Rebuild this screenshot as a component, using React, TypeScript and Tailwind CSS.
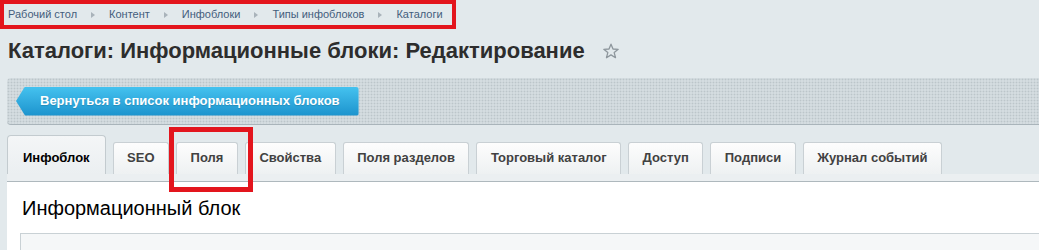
import { Fragment } from "react";

export default function App() {
  const crumbs = ["Рабочий стол", "Контент", "Инфоблоки", "Типы инфоблоков", "Каталоги"];
  const tabs = [
    "Инфоблок",
    "SEO",
    "Поля",
    "Свойства",
    "Поля разделов",
    "Торговый каталог",
    "Доступ",
    "Подписи",
    "Журнал событий",
  ];
  return (
    <div className="w-[1039px] h-[250px] overflow-hidden bg-[#e2e9ec] font-['Liberation_Sans',Arial,sans-serif] flex flex-col">
      <div className="flex">
        <div className="flex items-center h-[29px] border-4 border-[#e3151d] pl-1 pr-[9px] text-[11px] text-[#445d7c]">
          {crumbs.map((c, i) => (
            <Fragment key={i}>
              {i > 0 && (
                <span className="mx-[14px] w-0 h-0 border-y-[3.5px] border-y-transparent border-l-[4px] border-l-[#a9b3ba]" />
              )}
              <span>{c}</span>
            </Fragment>
          ))}
        </div>
      </div>

      <div className="h-[49px] shrink-0 pt-[9px] pl-2 flex items-start">
        <h1 className="text-[22px] leading-[26px] font-bold text-[#2d2d2d]">
          Каталоги: Информационные блоки: Редактирование
        </h1>
        <svg className="ml-[18px] mt-[5px]" width="16" height="16" viewBox="0 0 16 16">
          <polygon
            points="8,1.2 10,6 15.2,6.3 11.2,9.6 12.5,14.7 8,11.9 3.5,14.7 4.8,9.6 0.8,6.3 6,6"
            fill="none"
            stroke="#8d969c"
            strokeWidth="1.3"
            strokeLinejoin="round"
          />
        </svg>
      </div>

      <div className="ml-[7px] h-[47px] shrink-0 rounded-l-[4px] border-b border-[#a9b4ba] bg-[#d4dce0] bg-[radial-gradient(circle,#bcc5ca_0.8px,transparent_1.1px)] bg-size-[3px_3px] flex items-center pl-[9px]">
        <div className="h-[29px] flex items-center pl-[24px] pr-[19px] rounded-[3px] bg-linear-to-b from-[#44c2ef] to-[#1b93cd] text-white font-bold text-[13px] [text-shadow:0_1px_1px_rgba(0,0,0,0.15)] [clip-path:polygon(9px_0,100%_0,100%_100%,9px_100%,0_50%)]">
          Вернуться в список информационных блоков
        </div>
      </div>

      <div className="mt-[10px] ml-[7px] flex items-end gap-[7px] shrink-0">
        {tabs.map((t, i) =>
          i === 0 ? (
            <div
              key={t}
              className="h-[39px] pt-[7px] px-[15px] leading-[30px] text-[13px] font-bold text-black border-x border-t border-[#c3cbcf] rounded-t-[4px] bg-linear-to-b from-[#f4f6f7] to-[#ebeff1]"
            >
              {t}
            </div>
          ) : (
            <div
              key={t}
              className="relative h-[32px] px-[13.5px] leading-[30px] text-[13px] font-bold text-[#414141] border-x border-t border-[#c9d0d4] rounded-t-[3px] bg-linear-to-b from-[#fdfdfd] to-[#eef1f2]"
            >
              {t}
              {t === "Поля" && (
                <div className="absolute z-10 left-[-8px] top-[-16px] w-[84px] h-[65px] border-[5px] border-[#e3151d]" />
              )}
            </div>
          )
        )}
      </div>
      <div className="ml-[7px] h-[8px] shrink-0 bg-[#ebeff1] border-b border-[#aeb8bd]" />

      <div className="ml-[7px] flex-1 bg-white pl-[15px] pt-[14px]">
        <div className="text-[20px] leading-[24px] text-black">Информационный блок</div>
        <div className="mt-[13px] -ml-[2px] -mr-[10px] h-[40px] border border-[#c9d1d5] bg-[#f5f7f8]" />
      </div>
    </div>
  );
}
